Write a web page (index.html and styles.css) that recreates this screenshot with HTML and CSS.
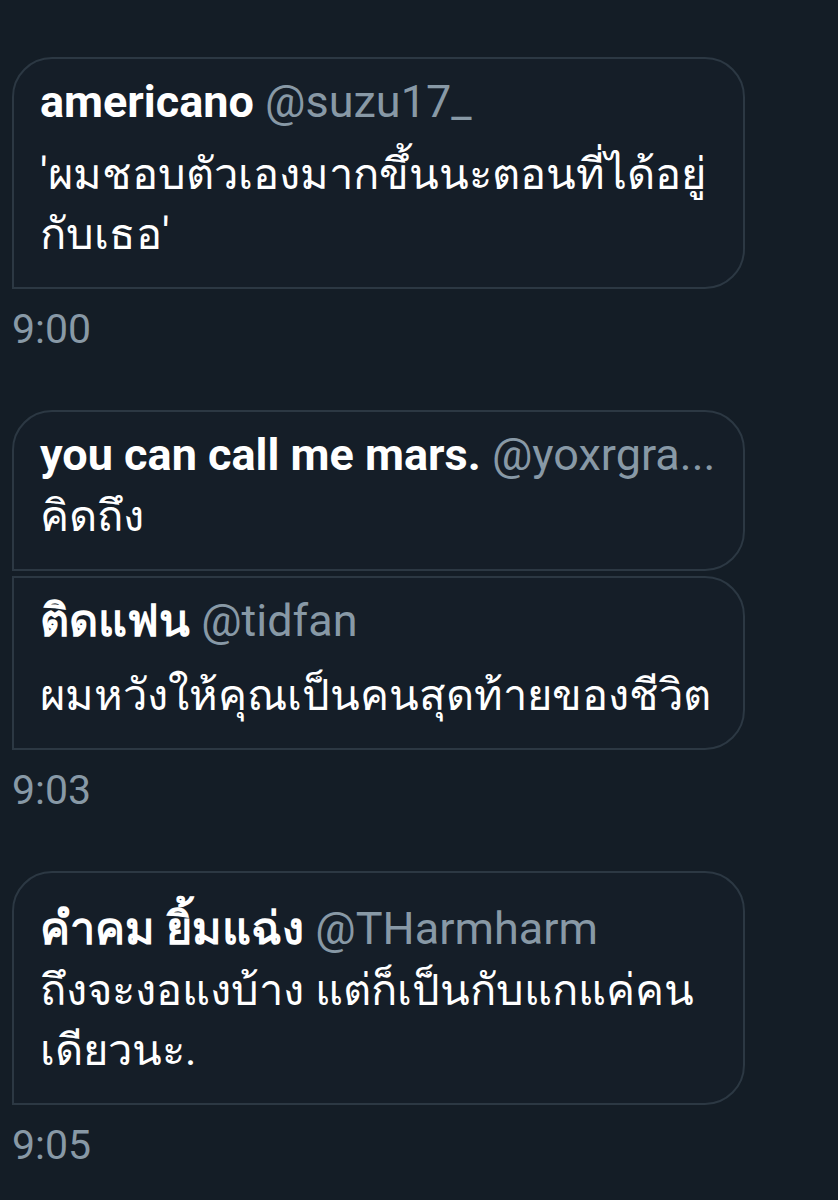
FILE: index.html
```html
<!DOCTYPE html>
<html lang="th">
<head>
<meta charset="utf-8">
<title>Messages</title>
<link rel="stylesheet" href="styles.css">
</head>
<body>
<main class="thread">
  <section class="group">
    <div class="bubble first">
      <div class="author"><span class="name">americano</span> <span class="handle">@suzu17_</span></div>
      <div class="text lift-sm">'ผมชอบตัวเองมากขึ้นนะตอนที่ได้อยู่<br>กับเธอ'</div>
    </div>
    <div class="time">9:00</div>
  </section>

  <section class="group">
    <div class="bubble first">
      <div class="author"><span class="name">you can call me mars.</span> <span class="handle">@yoxrgra...</span></div>
      <div class="text">คิดถึง</div>
    </div>
    <div class="bubble">
      <div class="author"><span class="name">ติดแฟน</span> <span class="handle">@tidfan</span></div>
      <div class="text lift">ผมหวังให้คุณเป็นคนสุดท้ายของชีวิต</div>
    </div>
    <div class="time">9:03</div>
  </section>

  <section class="group">
    <div class="bubble first">
      <div class="author lift"><span class="name">คำคม ยิ้มแฉ่ง</span> <span class="handle">@THarmharm</span></div>
      <div class="text">ถึงจะงอแงบ้าง แต่ก็เป็นกับแกแค่คน<br>เดียวนะ.</div>
    </div>
    <div class="time">9:05</div>
  </section>
</main>
</body>
</html>
```
FILE: styles.css
```css
html, body {
  margin: 0;
  padding: 0;
  background: #141d26;
}

body {
  font-family: Roboto, "Noto Sans", sans-serif;
  color: #ffffff;
}

.thread {
  width: 733px;
  padding: 57px 0 0 12px;
  display: flex;
  flex-direction: column;
}

.group {
  display: flex;
  flex-direction: column;
  gap: 5px;
}

.bubble {
  border: 2px solid #2c3843;
  border-radius: 0 40px 40px 0;
  padding: 13px 16px 22px 26px;
  background: #151e28;
}

.bubble.first {
  border-radius: 40px 40px 40px 0;
}

.author {
  font-size: 45px;
  line-height: 60px;
  white-space: nowrap;
}

.name {
  font-weight: 700;
  color: #ffffff;
}

.handle {
  font-weight: 400;
  color: #8899a6;
}

.text {
  font-size: 43.5px;
  line-height: 60px;
  margin-top: 2px;
  color: #ffffff;
}

.lift {
  padding-top: 13px;
}

.lift-sm {
  padding-top: 11px;
}

.time {
  font-size: 41px;
  line-height: 48px;
  color: #8899a6;
  margin: 11px 0 57px 0;
}
```
